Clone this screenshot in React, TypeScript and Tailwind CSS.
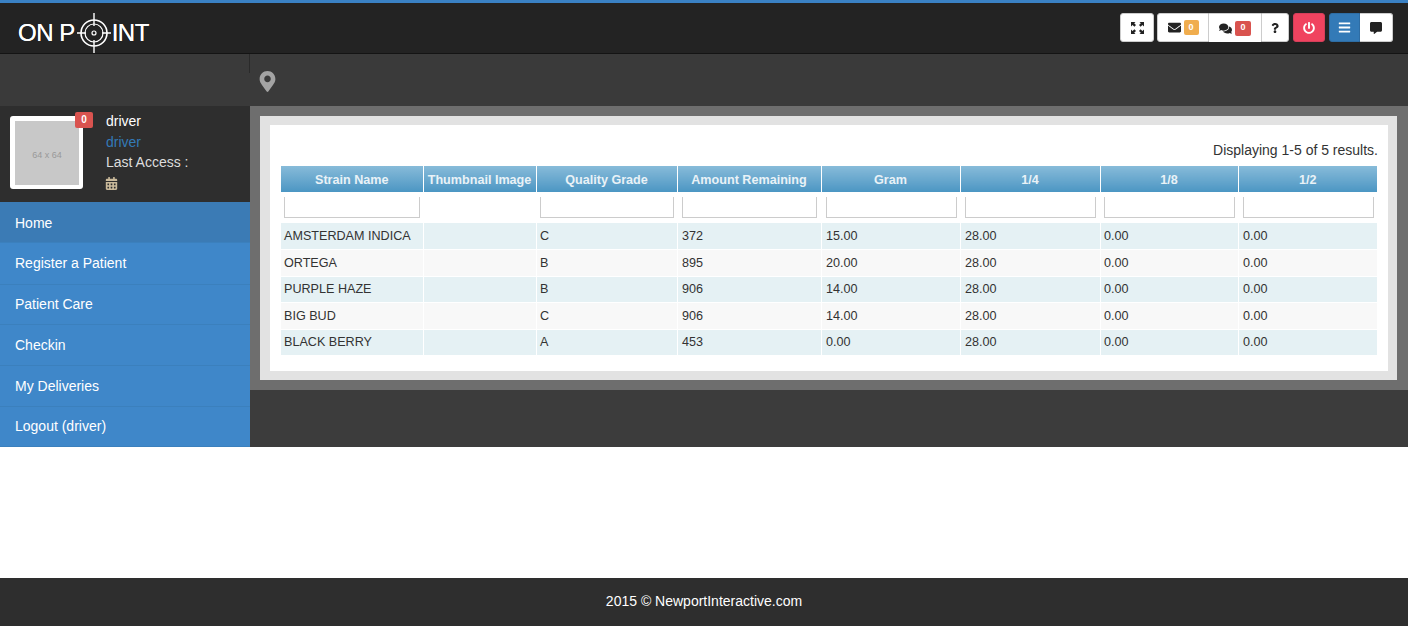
import { FaEnvelope, FaComments, FaQuestion, FaPowerOff, FaBars, FaCommentAlt, FaCalendarAlt, FaMapMarkerAlt } from "react-icons/fa";

const columns = [
  { name: "Strain Name", width: "w-[142px]", filter: "ml-[3px] mr-[3px]", pad: "pl-[3px]" },
  { name: "Thumbnail Image", width: "w-[113px]", filter: "", pad: "pl-[3px]" },
  { name: "Quality Grade", width: "w-[141px]", filter: "ml-[4px] mr-[3px]", pad: "pl-[3.5px]" },
  { name: "Amount Remaining", width: "w-[144px]", filter: "ml-[5px] mr-[4px]", pad: "pl-[4.5px]" },
  { name: "Gram", width: "w-[139px]", filter: "ml-[5px] mr-[3px]", pad: "pl-[4.5px]" },
  { name: "1/4", width: "w-[140px]", filter: "ml-[5px] mr-[4px]", pad: "pl-[4.5px]" },
  { name: "1/8", width: "w-[138px]", filter: "ml-[4px] mr-[3px]", pad: "pl-[3.5px]" },
  { name: "1/2", width: "w-[139px]", filter: "ml-[5px] mr-[3px]", pad: "pl-[4.5px]" },
];

const rows = [
  ["AMSTERDAM INDICA", "", "C", "372", "15.00", "28.00", "0.00", "0.00"],
  ["ORTEGA", "", "B", "895", "20.00", "28.00", "0.00", "0.00"],
  ["PURPLE HAZE", "", "B", "906", "14.00", "28.00", "0.00", "0.00"],
  ["BIG BUD", "", "C", "906", "14.00", "28.00", "0.00", "0.00"],
  ["BLACK BERRY", "", "A", "453", "0.00", "28.00", "0.00", "0.00"],
];

const navItems = [
  { label: "Home", pad: "pt-[3px] bg-[#3b7bb5]" },
  { label: "Register a Patient", pad: "" },
  { label: "Patient Care", pad: "" },
  { label: "Checkin", pad: "pt-[1px]" },
  { label: "My Deliveries", pad: "pt-[1px]" },
  { label: "Logout (driver)", pad: "" },
];

function Logo() {
  return (
    <div className="flex items-center text-white text-[24px] leading-none tracking-[-0.5px] mt-[10px] [text-shadow:0_0_0.5px_white]">
      <span>ON P</span>
      <svg width="34" height="40" viewBox="0 0 34 40" className="ml-[2px] shrink-0" fill="none" stroke="white">
        <circle cx="17" cy="20" r="13" strokeWidth="1.6" />
        <circle cx="17" cy="20" r="9" strokeWidth="1.2" />
        <circle cx="17" cy="20" r="2" strokeWidth="1.2" />
        <path d="M17 0V13M17 27V40M0 20H9M25 20H34" strokeWidth="1.4" />
      </svg>
      <span className="ml-[1px]">INT</span>
    </div>
  );
}

function FullscreenIcon() {
  return (
    <svg width="13" height="12" viewBox="0 0 13 12" fill="#222">
      <path d="M0 0H4.5L3.2 1.3L5 3.1L3.4 4.7L1.6 2.9L0 4.5ZM13 0V4.5L11.4 2.9L9.6 4.7L8 3.1L9.8 1.3L8.5 0ZM0 12V7.5L1.6 9.1L3.4 7.3L5 8.9L3.2 10.7L4.5 12ZM13 12H8.5L9.8 10.7L8 8.9L9.6 7.3L11.4 9.1L13 7.5Z" />
    </svg>
  );
}

function TopBar() {
  const btn = "h-[29px] bg-white border border-[#ccc] flex items-center justify-center text-[#222]";
  return (
    <header className="h-[54px] bg-[#232323] border-t-[3px] border-t-[#3a81c4] border-b border-b-[#141414] flex items-center justify-between pl-[18px] pr-[15px]">
      <Logo />
      <div className="flex items-center -mt-[1px]">
        <button className={`${btn} w-[34px] rounded-[3px] mr-[3px]`}>
          <FullscreenIcon />
        </button>
        <button className={`${btn} w-[52px] rounded-l-[3px] gap-[3px]`}>
          <FaEnvelope className="text-[13px]" />
          <span className="bg-[#f0ad4e] text-white text-[9px] font-bold w-[15px] h-[15px] rounded-[2px] flex items-center justify-center">0</span>
        </button>
        <button className={`${btn} w-[52px] gap-[3px] border-l-0 border-b-0 border-r-0`}>
          <FaComments className="text-[13px]" />
          <span className="bg-[#d9534f] text-white text-[9px] font-bold w-[16px] h-[15px] rounded-[2px] flex items-center justify-center">0</span>
        </button>
        <button className={`${btn} w-[28px] rounded-r-[3px] mr-[4px]`}>
          <FaQuestion className="text-[10px]" />
        </button>
        <button className="h-[29px] w-[32px] rounded-[3px] bg-[#f0435f] border border-[#d43f5a] flex items-center justify-center text-white mr-[4px]">
          <FaPowerOff className="text-[12px]" />
        </button>
        <button className="h-[29px] w-[31px] rounded-l-[3px] bg-[#337ab7] border border-[#2e6da4] flex items-center justify-center text-white">
          <FaBars className="text-[13px]" />
        </button>
        <button className={`${btn} w-[33px] rounded-r-[3px] border-l-0`}>
          <FaCommentAlt className="text-[12px]" />
        </button>
      </div>
    </header>
  );
}

function Sidebar() {
  return (
    <aside className="w-[250px] shrink-0 flex flex-col">
      <div className="h-[96px] bg-[#2e2e2e] flex pl-[10px] pt-[10px] text-[14px] leading-[20px]">
        <div className="w-[73px] h-[73px] bg-white rounded-[3px] pl-[5px] pt-[5px] shrink-0 relative">
          <div className="w-[64px] h-[64px] bg-[#c8c8c8] flex items-center justify-center pt-[3px] text-[9px] text-[#999]">64 x 64</div>
          <span className="absolute -top-[4px] -right-[10px] w-[18px] h-[16px] bg-[#d9534f] rounded-[2px] text-white text-[10px] font-bold flex items-center justify-center">0</span>
        </div>
        <div className="ml-[23px] -mt-[5px] flex flex-col text-[14px]">
          <span className="text-white h-[21px]">driver</span>
          <span className="text-[#337ab7] h-[20px]">driver</span>
          <span className="text-[#ddd] h-[21px]">Last Access :</span>
          <FaCalendarAlt className="text-[13px] text-[#c9b99a] mt-[4px] -ml-[1px]" />
        </div>
      </div>
      <nav className="h-[245px] grid grid-rows-[41px_42px_40px_41px_41px_40px] bg-[#3f87c9]">
        {navItems.map((item) => (
          <a
            key={item.label}
            href="#"
            className={`flex items-center pl-[15px] text-[14px] text-white border-b border-b-[#3b80bd] ${item.pad}`}
          >
            {item.label}
          </a>
        ))}
      </nav>
    </aside>
  );
}

function StrainTable() {
  return (
    <table className="w-[1096px] table-fixed border-collapse text-[12.6px] text-[#333]">
      <colgroup>
        {columns.map((c) => (
          <col key={c.name} className={c.width} />
        ))}
      </colgroup>
      <thead>
        <tr className="h-[26px]">
          {columns.map((c) => (
            <th
              key={c.name}
              className="bg-gradient-to-b from-[#87bbd9] to-[#4b96c3] text-[#e9f2f7] font-bold text-center border-r border-r-white last:border-r-0 p-0 pt-[2px] whitespace-nowrap"
            >
              {c.name}
            </th>
          ))}
        </tr>
        <tr className="h-[31px]">
          {columns.map((c) => (
            <td key={c.name} className="p-0 pb-[1px]">
              {c.filter && <div className={`${c.filter} h-[21px] border-x border-b border-[#ccc]`} />}
            </td>
          ))}
        </tr>
      </thead>
      <tbody>
        {rows.map((row, r) => (
          <tr key={row[0]} className={`h-[26.5px] ${r % 2 === 0 ? "bg-[#e5f1f4]" : "bg-[#f8f8f8]"}`}>
            {row.map((cell, i) => (
              <td
                key={i}
                className={`${columns[i].pad} ${r % 2 === 1 ? "pt-[2px]" : ""} border-r border-r-white last:border-r-0 border-b border-b-white whitespace-nowrap`}
              >
                {cell}
              </td>
            ))}
          </tr>
        ))}
      </tbody>
    </table>
  );
}

export default function App() {
  return (
    <div className="h-[626px] flex flex-col bg-white font-['Liberation_Sans',Arial,sans-serif]">
      <TopBar />
      <div className="h-[52px] bg-[#3a3a3a] flex shrink-0">
        <div className="w-[250px] h-[19px] border-r border-r-[#2a2a2a] shrink-0" />
        <FaMapMarkerAlt className="text-[21px] text-[#a3a3a3] ml-[7px] mt-[17px]" />
      </div>
      <div className="flex h-[341px] shrink-0">
        <Sidebar />
        <main className="flex-1 bg-[#3c3c3c]">
          <div className="h-[284px] bg-[#6e6e6e] p-[10px] pr-[11px]">
            <div className="h-[264px] bg-[#e2e2e2] py-[9px] pl-[10px] pr-[9px]">
              <div className="h-[246px] bg-white pl-[11px] pr-[10px] pt-[17px]">
                <p className="text-right text-[14px] leading-[16px] text-[#333] mb-[8px]">Displaying 1-5 of 5 results.</p>
                <StrainTable />
              </div>
            </div>
          </div>
        </main>
      </div>
      <div className="flex-1" />
      <footer className="h-[48px] bg-[#2e2e2e] flex items-center justify-center pb-[2px] text-white text-[14px]">
        2015 © NewportInteractive.com
      </footer>
    </div>
  );
}
